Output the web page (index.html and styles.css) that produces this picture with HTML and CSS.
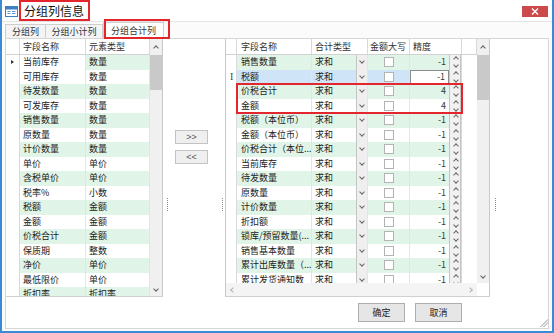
FILE: index.html
```html
<!DOCTYPE html>
<html lang="zh-CN">
<head>
  <meta charset="UTF-8" />
  <title>分组列信息</title>
  <link rel="stylesheet" href="styles.css">
</head>
<body>
  <div class="window">
    <div class="titlebar">
      <svg class="app-icon" width="13" height="11" viewBox="0 0 13 11">
        <rect x="0.5" y="0.5" width="12" height="10" fill="#fff" stroke="#3f7fc4"/>
        <rect x="1" y="1" width="11" height="2.5" fill="#3f7fc4"/>
        <path d="M2.5 5.5h3M2.5 7.5h3M7 5.5h3.5M7 7.5h3.5" stroke="#5a9ad8" stroke-width="1"/>
      </svg>
      <span class="title">分组列信息</span>
      <span class="close">
        <svg width="8" height="7" viewBox="0 0 8 7"><path d="M1 0.5l6 6M7 0.5l-6 6" stroke="#fff" stroke-width="1.4"/></svg>
      </span>
    </div>

    <div class="tabs">
      <div class="tab t1">分组列</div>
      <div class="tab t2">分组小计列</div>
      <div class="tab t3 active">分组合计列</div>
    </div>

    <div class="page">
      <div class="panels">
        <!-- 可选字段 -->
        <div class="grid lgrid">
          <div class="gmain">
            <div class="hdr">
              <div class="c ind"></div>
              <div class="c lname">字段名称</div>
              <div class="c ltype">元素类型</div>
            </div>
            <div class="gbody">
              <div class="row g"><div class="c ind"><i class="pointer"></i></div><div class="c lname d cur">当前库存</div><div class="c ltype d">数量</div></div>
              <div class="row"><div class="c ind"></div><div class="c lname d">可用库存</div><div class="c ltype d">数量</div></div>
              <div class="row g"><div class="c ind"></div><div class="c lname d">待发数量</div><div class="c ltype d">数量</div></div>
              <div class="row"><div class="c ind"></div><div class="c lname d">可发库存</div><div class="c ltype d">数量</div></div>
              <div class="row g"><div class="c ind"></div><div class="c lname d">销售数量</div><div class="c ltype d">数量</div></div>
              <div class="row"><div class="c ind"></div><div class="c lname d">原数量</div><div class="c ltype d">数量</div></div>
              <div class="row g"><div class="c ind"></div><div class="c lname d">计价数量</div><div class="c ltype d">数量</div></div>
              <div class="row"><div class="c ind"></div><div class="c lname d">单价</div><div class="c ltype d">单价</div></div>
              <div class="row g"><div class="c ind"></div><div class="c lname d">含税单价</div><div class="c ltype d">单价</div></div>
              <div class="row"><div class="c ind"></div><div class="c lname d">税率%</div><div class="c ltype d">小数</div></div>
              <div class="row g"><div class="c ind"></div><div class="c lname d">税额</div><div class="c ltype d">金额</div></div>
              <div class="row"><div class="c ind"></div><div class="c lname d">金额</div><div class="c ltype d">金额</div></div>
              <div class="row g"><div class="c ind"></div><div class="c lname d">价税合计</div><div class="c ltype d">金额</div></div>
              <div class="row"><div class="c ind"></div><div class="c lname d">保质期</div><div class="c ltype d">整数</div></div>
              <div class="row g"><div class="c ind"></div><div class="c lname d">净价</div><div class="c ltype d">单价</div></div>
              <div class="row"><div class="c ind"></div><div class="c lname d">最低限价</div><div class="c ltype d">单价</div></div>
              <div class="row g"><div class="c ind"></div><div class="c lname d">折扣率</div><div class="c ltype d">折扣率</div></div>
            </div>
          </div>
          <div class="vscroll">
            <i class="sb-btn"><i class="chev up"></i></i>
            <i class="thumb lthumb"></i>
            <i class="fill"></i>
            <i class="sb-btn bottom"><i class="chev down"></i></i>
          </div>
        </div>

        <div class="mid">
          <i class="grip"></i>
          <div class="move-btns">
            <button class="mbtn">&gt;&gt;</button>
            <button class="mbtn">&lt;&lt;</button>
          </div>
          <i class="grip grip-r"></i>
        </div>

        <!-- 合计列 -->
        <div class="grid rgrid">
          <div class="rtop">
            <div class="gmain">
              <div class="hdr">
                <div class="c ind"></div>
                <div class="c rname">字段名称</div>
                <div class="c rtype">合计类型</div>
                <div class="c chk">金额大写</div>
                <div class="c prec">精度</div>
                <div class="c filler"></div>
              </div>
              <div class="gbody">
                <div class="row g"><div class="c ind"></div><div class="c rname d">销售数量</div><div class="c rtype d"><span>求和</span><i class="dd"></i></div><div class="c chk d"><i class="box"></i></div><div class="c prec d"><span>-1</span><i class="spin"></i></div></div>
                <div class="row sel"><div class="c ind"><span class="ibeam">I</span></div><div class="c rname d">税额</div><div class="c rtype d"><span>求和</span><i class="dd"></i></div><div class="c chk d"><i class="box"></i></div><div class="c prec d"><span class="edit">-1</span><i class="spin"></i></div></div>
                <div class="row g"><div class="c ind"></div><div class="c rname d">价税合计</div><div class="c rtype d"><span>求和</span><i class="dd"></i></div><div class="c chk d"><i class="box"></i></div><div class="c prec d"><span>4</span><i class="spin"></i></div></div>
                <div class="row"><div class="c ind"></div><div class="c rname d">金额</div><div class="c rtype d"><span>求和</span><i class="dd"></i></div><div class="c chk d"><i class="box"></i></div><div class="c prec d"><span>4</span><i class="spin"></i></div></div>
                <div class="row g"><div class="c ind"></div><div class="c rname d">税额（本位币）</div><div class="c rtype d"><span>求和</span><i class="dd"></i></div><div class="c chk d"><i class="box"></i></div><div class="c prec d"><span>-1</span><i class="spin"></i></div></div>
                <div class="row"><div class="c ind"></div><div class="c rname d">金额（本位币）</div><div class="c rtype d"><span>求和</span><i class="dd"></i></div><div class="c chk d"><i class="box"></i></div><div class="c prec d"><span>-1</span><i class="spin"></i></div></div>
                <div class="row g"><div class="c ind"></div><div class="c rname d">价税合计（本位...</div><div class="c rtype d"><span>求和</span><i class="dd"></i></div><div class="c chk d"><i class="box"></i></div><div class="c prec d"><span>-1</span><i class="spin"></i></div></div>
                <div class="row"><div class="c ind"></div><div class="c rname d">当前库存</div><div class="c rtype d"><span>求和</span><i class="dd"></i></div><div class="c chk d"><i class="box"></i></div><div class="c prec d"><span>-1</span><i class="spin"></i></div></div>
                <div class="row g"><div class="c ind"></div><div class="c rname d">待发数量</div><div class="c rtype d"><span>求和</span><i class="dd"></i></div><div class="c chk d"><i class="box"></i></div><div class="c prec d"><span>-1</span><i class="spin"></i></div></div>
                <div class="row"><div class="c ind"></div><div class="c rname d">原数量</div><div class="c rtype d"><span>求和</span><i class="dd"></i></div><div class="c chk d"><i class="box"></i></div><div class="c prec d"><span>-1</span><i class="spin"></i></div></div>
                <div class="row g"><div class="c ind"></div><div class="c rname d">计价数量</div><div class="c rtype d"><span>求和</span><i class="dd"></i></div><div class="c chk d"><i class="box"></i></div><div class="c prec d"><span>-1</span><i class="spin"></i></div></div>
                <div class="row"><div class="c ind"></div><div class="c rname d">折扣额</div><div class="c rtype d"><span>求和</span><i class="dd"></i></div><div class="c chk d"><i class="box"></i></div><div class="c prec d"><span>-1</span><i class="spin"></i></div></div>
                <div class="row g"><div class="c ind"></div><div class="c rname d">锁库/预留数量(...</div><div class="c rtype d"><span>求和</span><i class="dd"></i></div><div class="c chk d"><i class="box"></i></div><div class="c prec d"><span>-1</span><i class="spin"></i></div></div>
                <div class="row"><div class="c ind"></div><div class="c rname d">销售基本数量</div><div class="c rtype d"><span>求和</span><i class="dd"></i></div><div class="c chk d"><i class="box"></i></div><div class="c prec d"><span>-1</span><i class="spin"></i></div></div>
                <div class="row g"><div class="c ind"></div><div class="c rname d">累计出库数量（...</div><div class="c rtype d"><span>求和</span><i class="dd"></i></div><div class="c chk d"><i class="box"></i></div><div class="c prec d"><span>-1</span><i class="spin"></i></div></div>
                <div class="row"><div class="c ind"></div><div class="c rname d">累计发货通知数</div><div class="c rtype d"><span>求和</span><i class="dd"></i></div><div class="c chk d"><i class="box"></i></div><div class="c prec d"><span>-1</span><i class="spin"></i></div></div>

                <div class="mark"></div>
              </div>
            </div>
            <div class="vscroll">
              <i class="sb-btn"><i class="chev up"></i></i>
              <i class="thumb rthumb"></i>
              <i class="fill"></i>
              <i class="sb-btn bottom"><i class="chev down"></i></i>
            </div>
          </div>
          <div class="hscroll">
            <i class="hs-btn"><i class="chev left"></i></i>
            <i class="fill"></i>
            <i class="hs-btn"><i class="chev right"></i></i>
            <i class="corner"></i>
          </div>
        </div>

        <div class="side"><i class="grip"></i></div>
      </div>

      <div class="footer">
        <div class="actions">
          <button class="btn">确定</button>
          <button class="btn">取消</button>
        </div>
        <i class="size-grip"></i>
      </div>
    </div>
  </div>
</body>
</html>
```

FILE: styles.css
```css
* {
  box-sizing: border-box;
}

body {
  margin: 0;
  font-family: "Noto Sans CJK SC", "Noto Sans", sans-serif;
  font-size: 9px;
  color: #222;
  background: #fff;
}

i {
  font-style: normal;
  display: block;
}

.window {
  width: 554px;
  height: 333px;
  border: 2px solid #3a8ad6;
  border-top: 0;
  background: #fbfbfb;
  display: flex;
  flex-direction: column;
}

/* title bar */
.titlebar {
  height: 22px;
  display: flex;
  align-items: center;
  padding-left: 3px;
  background: #fff;
  border-bottom: 1px solid #e4e4e4;
  position: relative;
  z-index: 1;
}

.app-icon {
  margin-top: 2px;
  flex: none;
}

.title {
  width: 71px;
  height: 21px;
  margin-left: 1px;
  padding-left: 3px;
  border: 2px solid #e2262c;
  font-size: 12px;
  line-height: 17px;
  color: #111;
}

.close {
  margin-left: auto;
  margin-right: 4px;
  align-self: flex-start;
  margin-top: 6px;
  width: 26px;
  height: 11px;
  background: #cd4a4a;
  display: flex;
  align-items: center;
  justify-content: center;
}

/* tabs */
.tabs {
  height: 16px;
  display: flex;
  align-items: flex-end;
  padding-left: 3px;
  position: relative;
  z-index: 2;
}

.tab {
  height: 14px;
  line-height: 13px;
  text-align: center;
  border: 1px solid #cfcfcf;
  border-bottom: 0;
  background: #f4f4f4;
  color: #333;
}

.t1 { width: 41px; }
.t2 { width: 58px; margin-left: -1px; }

.tab.active {
  width: 61px;
  height: 17px;
  margin-bottom: -1px;
  line-height: 15px;
  background: #fff;
  position: relative;
}

.tab.active::after {
  content: "";
  position: absolute;
  top: -4px;
  left: 0;
  right: -7px;
  bottom: 0;
  border: 2px solid #e2262c;
}

/* tab page */
.page {
  flex: 1;
  margin: 0 3px 2px;
  border: 1px solid #d6d6d6;
  background: #fff;
  display: flex;
  flex-direction: column;
}

.panels {
  height: 258px;
  display: flex;
}

/* grids */
.grid {
  display: flex;
  background: #fff;
}

.gmain {
  display: flex;
  flex-direction: column;
}

.hdr {
  height: 16px;
  display: flex;
  border-bottom: 1px solid #d2d2d2;
  background: #fff;
  color: #333;
}

.hdr .c {
  line-height: 15px;
  border-right: 1px solid #d9d9d9;
}

.gbody {
  overflow: hidden;
  position: relative;
}

.row {
  display: flex;
  height: 14.5px;
}

.c {
  height: 100%;
  padding-left: 3px;
  line-height: 14px;
  white-space: nowrap;
  overflow: hidden;
  border-right: 1px solid #e4e4e4;
  flex: none;
}

.g .d {
  background: #e0f5e7;
}

.g .d.cur {
  background: #fff;
}

.sel .d {
  background: #cfe5f7;
}

.ind {
  padding-left: 0;
  background: #fff;
  border-right-color: #d9d9d9;
}

.pointer {
  margin: 5px 0 0 5px;
  width: 0;
  height: 0;
  border-left: 3px solid #333;
  border-top: 2.5px solid transparent;
  border-bottom: 2.5px solid transparent;
}

.ibeam {
  display: block;
  padding-left: 4px;
  font-family: "Liberation Serif", serif;
  font-size: 10px;
  color: #444;
}

/* left grid */
.lgrid {
  width: 157px;
  height: 258px;
  border-right: 1px solid #c9c9c9;
  border-bottom: 1px solid #d0d0d0;
}

.lgrid .ind { width: 14px; }
.lname { width: 66px; }
.ltype { width: 64px; }

.lgrid .gbody {
  height: 241px;
}

/* right grid */
.rgrid {
  width: 265px;
  height: 258px;
  flex-direction: column;
  border-left: 1px solid #c9c9c9;
  border-right: 1px solid #c9c9c9;
  border-bottom: 1px solid #d0d0d0;
}

.rtop {
  height: 244px;
  display: flex;
}

.rgrid .gbody {
  height: 228px;
}

.rgrid .ind { width: 11px; }

.rname {
  width: 75px;
  padding-left: 4px;
}

.rtype {
  width: 56px;
  display: flex;
  padding-right: 0;
}

.rtype span {
  flex: 1;
}

.dd {
  width: 11px;
  height: 100%;
  border-left: 1px solid #c4c4c4;
  background: #efefef;
  position: relative;
}

.dd::after {
  content: "";
  position: absolute;
  left: 3px;
  top: 4px;
  width: 3px;
  height: 3px;
  border-right: 1px solid #666;
  border-bottom: 1px solid #666;
  transform: rotate(45deg);
}

.chk {
  width: 42px;
  padding-left: 0;
  display: flex;
  align-items: center;
  justify-content: center;
}

.hdr .chk {
  display: block;
  padding-left: 2px;
}

.box {
  width: 10px;
  height: 10px;
  border: 1px solid #b3b3b3;
  background: #fff;
}

.prec {
  width: 52px;
  display: flex;
  padding-left: 0;
  border-right-color: #d9d9d9;
}

.hdr .prec {
  display: block;
  padding-left: 3px;
}

.prec span {
  flex: 1;
  text-align: right;
  padding-right: 3px;
  color: #2f3f33;
}

.prec .edit {
  background: #fff;
  border: 1px solid #8c8c8c;
  line-height: 12px;
}

.spin {
  width: 12px;
  height: 100%;
  border-left: 1px solid #c4c4c4;
  border-right: 1px solid #c4c4c4;
  background: #f1f1f1;
  position: relative;
}

.spin::before,
.spin::after {
  content: "";
  position: absolute;
  left: 4px;
  width: 3px;
  height: 3px;
  border-left: 1px solid #666;
  border-top: 1px solid #666;
}

.spin::before {
  top: 2px;
  transform: rotate(45deg);
}

.spin::after {
  top: 8px;
  transform: rotate(225deg);
}

.filler {
  width: 15px;
  border-right: 0;
}

.mark {
  position: absolute;
  left: 10px;
  top: 28px;
  width: 227px;
  height: 31px;
  border: 2px solid #e2262c;
}

/* scrollbars */
.vscroll {
  width: 12px;
  background: #f0f0f0;
  display: flex;
  flex-direction: column;
}

.sb-btn {
  height: 16px;
  display: flex;
  align-items: center;
  justify-content: center;
}

.sb-btn.bottom {
  height: 13px;
}

.thumb {
  background: #c9c9c9;
}

.lthumb { height: 35px; }
.rthumb { height: 45px; }

.fill {
  flex: 1;
}

.chev {
  width: 4px;
  height: 4px;
  border-left: 1px solid #606060;
  border-top: 1px solid #606060;
}

.chev.up { transform: rotate(45deg); margin-top: 2px; }
.chev.down { transform: rotate(225deg); margin-top: -2px; }
.chev.left { transform: rotate(-45deg); border-color: #b0b0b0; margin-left: 2px; }
.chev.right { transform: rotate(135deg); border-color: #b0b0b0; margin-left: -2px; }

.hscroll {
  height: 13px;
  display: flex;
  background: #f4f4f4;
}

.hs-btn {
  width: 12px;
  display: flex;
  align-items: center;
  justify-content: center;
}

.corner {
  width: 12px;
  background: #fff;
}

/* middle move buttons */
.mid {
  width: 62px;
  display: flex;
  align-items: flex-start;
}

.grip {
  width: 1px;
  height: 13px;
  margin-top: 159px;
  border-left: 1px dotted #8a8a8a;
  margin-left: 4px;
}

.mid .grip-r {
  margin-left: 14px;
}

.move-btns {
  margin-left: 7px;
  padding-top: 91px;
  display: flex;
  flex-direction: column;
  gap: 6px;
}

.mbtn {
  width: 33px;
  height: 14px;
  padding: 0;
  border: 1px solid #c3c3c3;
  background: #efefef;
  font-family: "Liberation Sans", sans-serif;
  font-size: 9px;
  line-height: 12px;
  color: #555;
}

.side {
  flex: 1;
  background: #fff;
}

.side .grip {
  margin-left: 5px;
}

/* footer */
.footer {
  flex: 1;
  display: flex;
  justify-content: flex-end;
}

.actions {
  display: flex;
  gap: 10px;
  padding-top: 6px;
  margin-right: 77px;
}

.btn {
  width: 47px;
  height: 19px;
  padding: 0;
  border: 1px solid #adadad;
  background: #e6e6e6;
  font-family: "Noto Sans CJK SC", sans-serif;
  font-size: 9px;
  color: #222;
}

.size-grip {
  align-self: flex-end;
  width: 9px;
  height: 9px;
  margin-bottom: 1px;
  background:
    linear-gradient(135deg, transparent 0 55%, #c8c8c8 55% 62%, transparent 62% 72%, #c8c8c8 72% 79%, transparent 79%);
}
```
